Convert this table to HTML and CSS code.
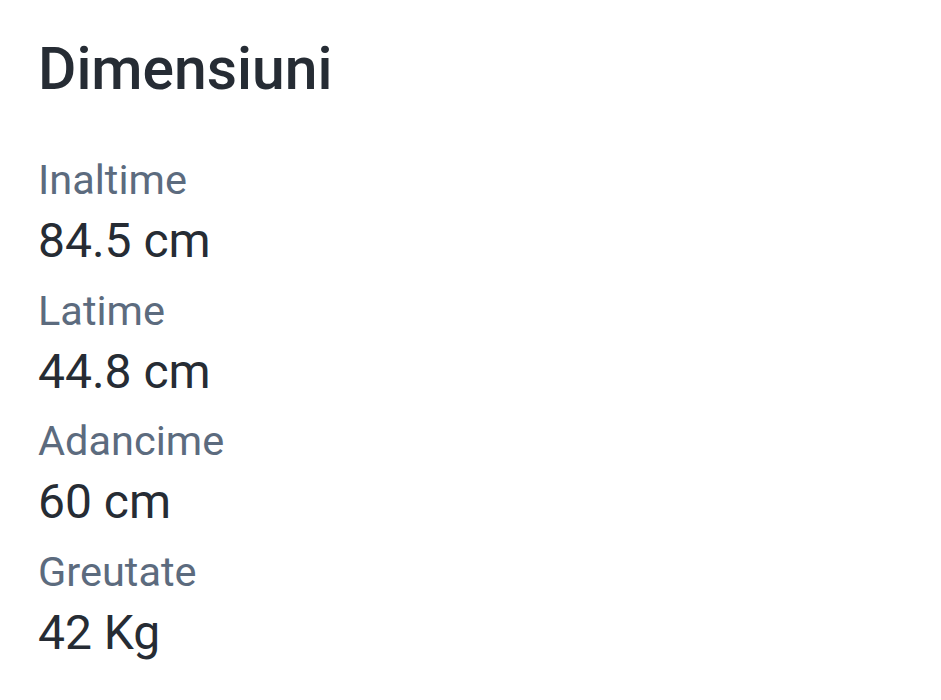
FILE: index.html
```html
<!DOCTYPE html>
<html lang="ro">
<head>
<meta charset="utf-8">
<link rel="stylesheet" href="styles.css">
</head>
<body>
<section class="specs">
  <h1 class="title">Dimensiuni</h1>
  <dl class="list">
    <div class="item"><dt class="label">Inaltime</dt><dd class="value">84.5 cm</dd></div>
    <div class="item"><dt class="label">Latime</dt><dd class="value">44.8 cm</dd></div>
    <div class="item"><dt class="label">Adancime</dt><dd class="value">60 cm</dd></div>
    <div class="item"><dt class="label">Greutate</dt><dd class="value">42 Kg</dd></div>
  </dl>
</section>
</body>
</html>
```
FILE: styles.css
```css
html, body { margin: 0; padding: 0; background: #ffffff; }
body { font-family: Roboto, "Noto Sans", sans-serif; }
.specs { padding: 34px 38px 0 38px; }
.title { margin: 0; font-size: 58.8px; font-weight: 500; line-height: 70px; color: #262c34; }
.list { margin: 48px 0 0 0; padding: 0; display: flex; flex-direction: column; }
.item { display: flex; flex-direction: column; height: 130.5px; }
.label { margin: 0; font-size: 41.5px; line-height: 56px; color: #5c6b7e; }
.value { margin: 0; font-size: 48px; line-height: 66px; color: #262c34; }
```
